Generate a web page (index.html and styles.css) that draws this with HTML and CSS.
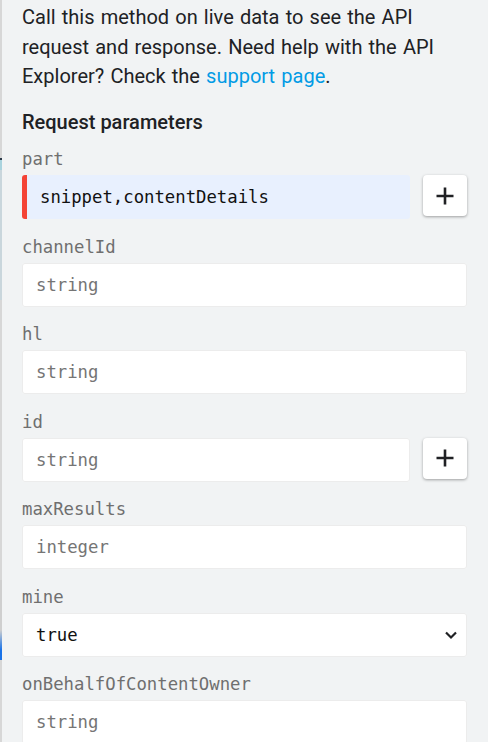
FILE: index.html
```html
<!DOCTYPE html>
<html>
<head>
<meta charset="utf-8">
<link rel="stylesheet" href="styles.css">
</head>
<body>
<div class="page">
  <div class="edge"></div>
  <main class="panel">
    <p class="intro">Call this method on live data to see the API request and response. Need help with the API Explorer? Check the <a href="#" class="link">support page</a>.</p>
    <h2 class="heading">Request parameters</h2>

    <div class="field">
      <label class="label">part</label>
      <div class="row">
        <div class="input input-required"><span class="value">snippet,contentDetails</span></div>
        <button class="add" aria-label="add"><svg width="20" height="20" viewBox="0 0 20 20"><path d="M10 1.5v17M1.5 10h17" stroke="#202124" stroke-width="2.6" fill="none"/></svg></button>
      </div>
    </div>

    <div class="field">
      <label class="label">channelId</label>
      <div class="row"><div class="input"><span class="ph">string</span></div></div>
    </div>

    <div class="field">
      <label class="label">hl</label>
      <div class="row"><div class="input"><span class="ph">string</span></div></div>
    </div>

    <div class="field">
      <label class="label">id</label>
      <div class="row">
        <div class="input"><span class="ph">string</span></div>
        <button class="add" aria-label="add"><svg width="20" height="20" viewBox="0 0 20 20"><path d="M10 1.5v17M1.5 10h17" stroke="#202124" stroke-width="2.6" fill="none"/></svg></button>
      </div>
    </div>

    <div class="field">
      <label class="label">maxResults</label>
      <div class="row"><div class="input"><span class="ph">integer</span></div></div>
    </div>

    <div class="field">
      <label class="label">mine</label>
      <div class="row">
        <div class="input select"><span class="value">true</span>
          <svg class="chev" width="14" height="10" viewBox="0 0 14 10"><path d="M2 2.5l5 5 5-5" stroke="#202124" stroke-width="2.2" fill="none"/></svg>
        </div>
      </div>
    </div>

    <div class="field">
      <label class="label">onBehalfOfContentOwner</label>
      <div class="row"><div class="input"><span class="ph">string</span></div></div>
    </div>
  </main>
</div>
</body>
</html>
```

FILE: styles.css
```css
html, body {
  margin: 0;
  padding: 0;
  background: #f1f3f4;
  height: 742px;
  overflow: hidden;
}
.page {
  display: flex;
  height: 742px;
}
.edge {
  width: 2px;
  flex: none;
  background: linear-gradient(to bottom, #d7d7d7 0, #d7d7d7 158px, #2b3a4a 158px, #2b3a4a 160px, #a9d3de 160px, #a9d3de 170px, #c9d6dc 170px, #c9d6dc 300px, #d7d7d7 300px, #d7d7d7 580px, #cfcfcf 580px, #cfcfcf 630px, #1a73e8 650px, #1a73e8 660px, #d7d7d7 660px);
}
.panel {
  flex: 1;
  padding: 3px 21px 0 20px;
  font-family: Roboto, "Noto Sans", sans-serif;
  color: #202124;
}
.intro {
  margin: 0;
  font-size: 20px;
  line-height: 29.5px;
  word-spacing: 1.2px;
}
.link {
  color: #039be5;
  text-decoration: none;
}
.heading {
  margin: 18.5px 0 0;
  font-size: 20px;
  font-weight: 500;
  line-height: 24px;
}
.field {
  margin-top: 13px;
}
.field + .field {
  margin-top: 15.5px;
}
.label {
  display: block;
  font-family: "DejaVu Sans Mono", "Liberation Mono", monospace;
  font-size: 17.3px;
  line-height: 24px;
  color: #6f6f6f;
}
.row {
  display: flex;
  gap: 13px;
  margin-top: 4px;
  align-items: flex-start;
}
.input {
  flex: 1;
  height: 44px;
  box-sizing: border-box;
  background: #fff;
  border-radius: 3px;
  display: flex;
  align-items: center;
  padding: 0 14px;
  font-family: "DejaVu Sans Mono", "Liberation Mono", monospace;
  font-size: 17.3px;
  box-shadow: inset 0 0 0 1px #ececec;
}
.input-required {
  background: #e8f0fe;
  border-left: 5px solid #f44336;
  padding-left: 13px;
  box-shadow: none;
}
.value {
  color: #111;
}
.ph {
  color: #757575;
}
.select {
  justify-content: space-between;
  padding-right: 9px;
}
.add {
  width: 44px;
  height: 41px;
  flex: none;
  border: none;
  background: #fff;
  border-radius: 4px;
  box-shadow: 0 1px 3px rgba(0,0,0,0.35);
  display: flex;
  align-items: center;
  justify-content: center;
  padding: 0;
}
```
